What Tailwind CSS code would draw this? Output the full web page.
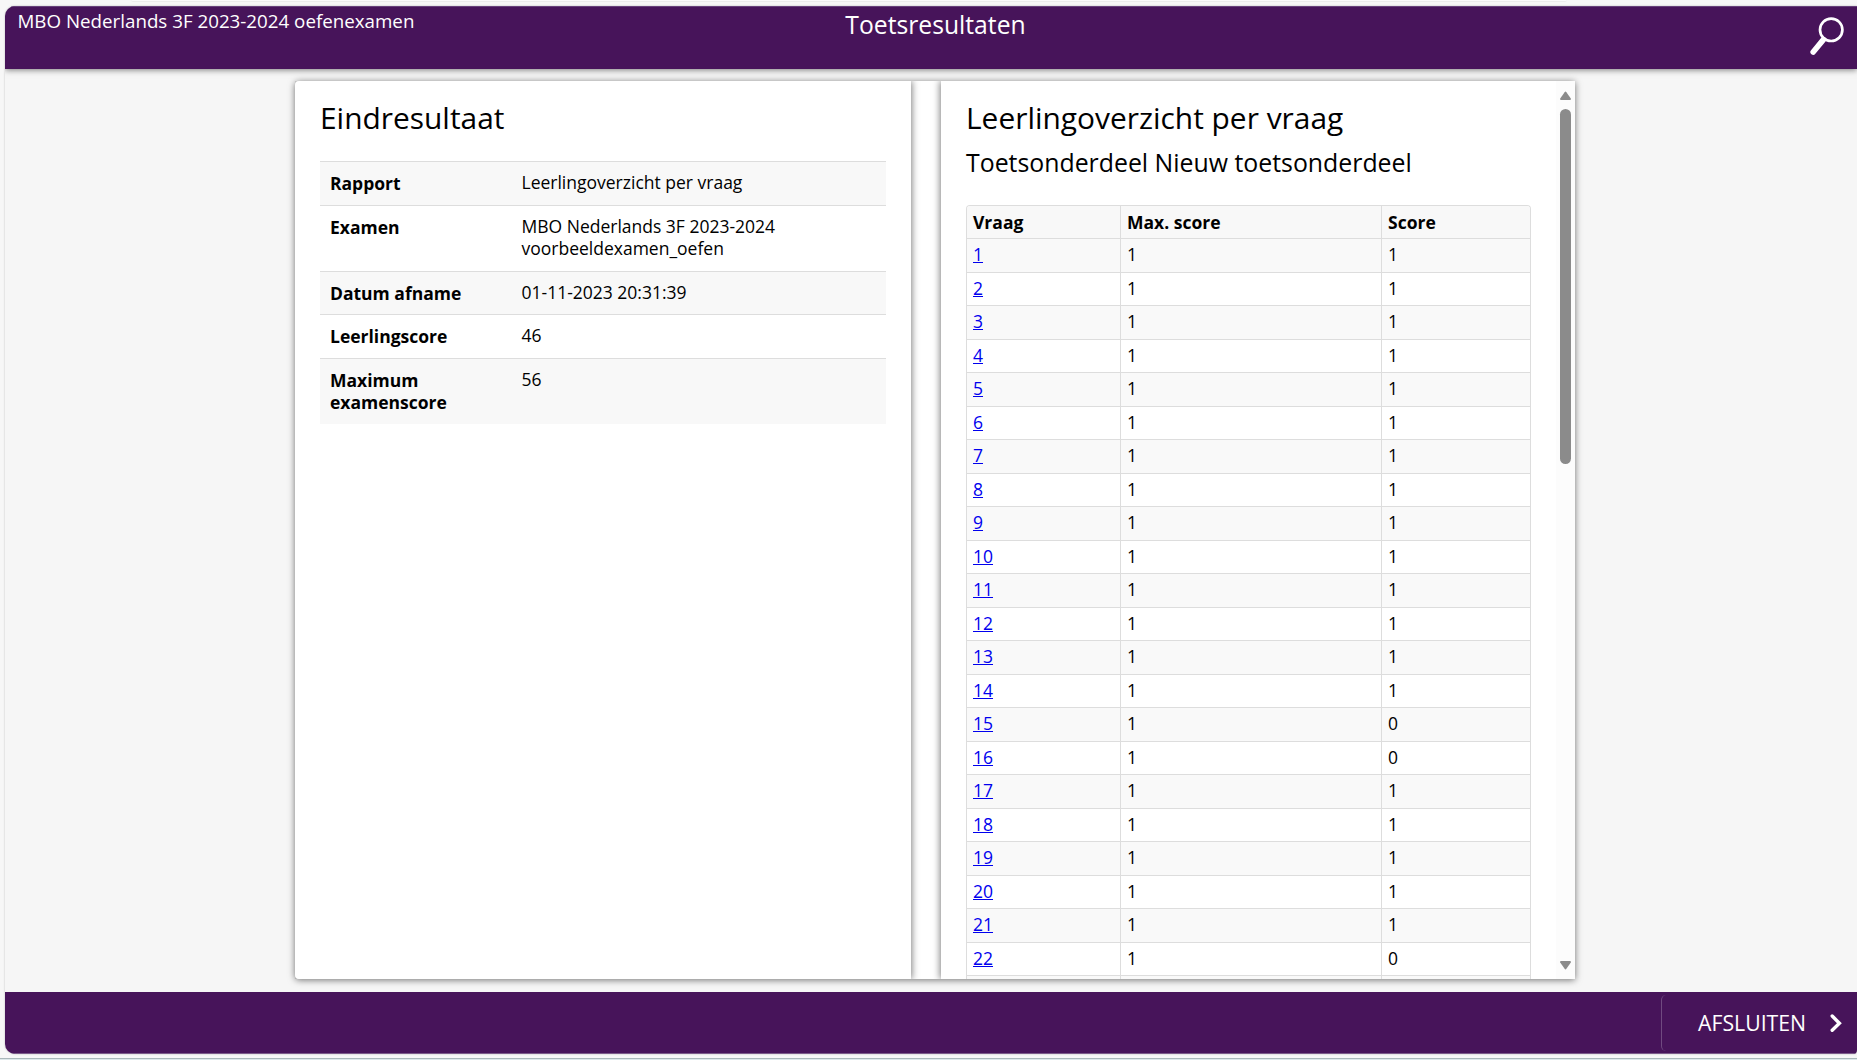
<!DOCTYPE html>
<html lang="nl">
<head>
<meta charset="utf-8">
<title>Toetsresultaten</title>
<script src="https://cdn.jsdelivr.net/npm/@tailwindcss/browser@4"></script>
</head>
<body class="flex h-[1060px] w-[1857px] flex-col overflow-hidden bg-[#f7f7f7] font-['Open_Sans',sans-serif] text-[17.5px] leading-[22px] text-black">
  <div class="flex h-1.5 shrink-0 justify-center">
    <div class="mr-[160px] h-0.5 w-[1436px] rounded-b-lg border-b border-[#ececec] bg-[#fbfbfb]"></div>
  </div>
  <div class="ml-[5px] flex h-[1048px] shrink-0 flex-col overflow-hidden rounded-l-[10px] rounded-br-[4px] bg-[#f6f6f6] shadow-[0_0_2px_rgba(0,0,0,0.25)]">
    <header class="z-10 grid h-[63px] shrink-0 grid-cols-[1fr_auto_1fr] border-t border-[#66407a] bg-[#47145a] pt-0.5 text-white shadow-[0_1px_6px_rgba(0,0,0,0.5)]">
      <div class="pl-[12.5px] text-[18.75px] leading-6">MBO Nederlands 3F 2023-2024 oefenexamen</div>
      <h1 class="pt-px pl-[9px] text-[24.7px] leading-[30px]">Toetsresultaten</h1>
      <div class="flex justify-end pt-1.5 pr-3">
        <svg class="h-[42px] w-[36px]" viewBox="0 0 36 42" fill="none" stroke="#fff" stroke-linecap="round">
          <circle cx="22.2" cy="14.8" r="11.2" stroke-width="2.7"/>
          <path d="M14.4 24.6L4.2 37" stroke-width="5.6"/>
        </svg>
      </div>
    </header>

    <main class="flex min-h-0 grow pt-3 pb-[13px] pl-[290px]">
      <div class="flex w-[1280px] gap-[30px] rounded-l-[4px] bg-white shadow-[0_1px_7px_rgba(0,0,0,0.55)] [clip-path:inset(-12px)]">
        <section class="w-[616px] rounded-l-[4px] bg-white pt-[17px] pr-[25px] pl-[25px] shadow-[1px_0_7px_rgba(0,0,0,0.5)] [clip-path:inset(0_-12px_0_0)]">
          <h2 class="text-[29.9px] leading-10">Eindresultaat</h2>
          <dl class="mt-[23px] [&>div]:flex [&>div]:border-t [&>div]:border-[#dddddd] [&_dt]:w-[191px] [&_dt]:pt-2.5 [&_dt]:pr-8 [&_dt]:pl-2.5 [&_dt]:font-bold [&_dd]:w-[320px] [&_dd]:pt-[9px] [&_dd]:pl-[10.5px]">
            <div class="h-11 bg-[#f8f8f8]"><dt>Rapport</dt><dd>Leerlingoverzicht per vraag</dd></div>
            <div class="h-[66px]"><dt>Examen</dt><dd>MBO Nederlands 3F 2023-2024 voorbeeldexamen_oefen</dd></div>
            <div class="h-[43px] bg-[#f8f8f8]"><dt>Datum afname</dt><dd>01-11-2023 20:31:39</dd></div>
            <div class="h-11"><dt>Leerlingscore</dt><dd>46</dd></div>
            <div class="h-[66px] bg-[#f8f8f8]"><dt>Maximum examenscore</dt><dd>56</dd></div>
          </dl>
        </section>

        <section class="flex w-[634px] bg-white shadow-[-1px_0_7px_rgba(0,0,0,0.5)] [clip-path:inset(0_0_0_-12px)]">
          <div class="h-[898px] grow overflow-hidden pt-[17px] pl-[25px]">
            <h2 class="text-[29.9px] leading-10">Leerlingoverzicht per vraag</h2>
            <h3 class="mt-[9px] text-[24.85px] leading-[30px]">Toetsonderdeel Nieuw toetsonderdeel</h3>
            <div class="mt-7 w-[565px] overflow-hidden rounded-t-[4px] border-x border-t border-[#dddddd]">
              <div class="grid h-8 grid-cols-[153px_261px_149px] bg-[#f8f8f8] font-bold">
                <div class="pt-[5px] pl-1.5">Vraag</div>
                <div class="border-l border-[#dddddd] pt-[5px] pl-1.5">Max. score</div>
                <div class="border-l border-[#dddddd] pt-[5px] pl-1.5">Score</div>
              </div>
              <div id="rows"></div>
              <div class="grid h-8 grid-cols-[153px_261px_149px] border-t border-[#dddddd] bg-[#f9f9f9]">
                <div></div>
                <div class="border-l border-[#dddddd]"></div>
                <div class="border-l border-[#dddddd]"></div>
              </div>
            </div>
          </div>
          <div class="flex w-[19px] flex-col items-center bg-[#fcfcfc] pt-2.5 pr-px pb-[9px]">
            <svg class="h-[9px] w-[11px]" viewBox="0 0 11 9"><path d="M4.6 1.2Q5.5 0 6.4 1.2L10.8 7.6Q11.2 9 10 9H1Q-.2 9 .2 7.6Z" fill="#8b8b8b"/></svg>
            <div class="mt-[9px] h-[355px] w-[11px] rounded-full bg-[#8b8b8b]"></div>
            <svg class="mt-auto h-[9px] w-[11px]" viewBox="0 0 11 9"><path d="M4.6 7.8Q5.5 9 6.4 7.8L10.8 1.4Q11.2 0 10 0H1Q-.2 0 .2 1.4Z" fill="#8b8b8b"/></svg>
          </div>
        </section>
      </div>
    </main>

    <footer class="flex h-[62px] shrink-0 justify-end border-b border-[#7b5a8a] bg-[#47145a] pt-[3px] pb-0.5 text-white">
      <button class="flex w-[196px] items-center rounded-l-[5px] border-l border-[#704a80] pl-9 text-left text-[21.25px] leading-[29px]">
        <span class="w-[131px] pb-0.5">AFSLUITEN</span>
        <svg class="-mt-px h-5 w-[14px]" viewBox="0 0 14 20" fill="none" stroke="#fff" stroke-width="3.4" stroke-linecap="round" stroke-linejoin="miter"><path d="M3.2 3L10.4 10.2L3.2 17.2"/></svg>
      </button>
    </footer>
  </div>
  <div class="mt-1 h-0.5 shrink-0 border-t border-[#a9b7ba] bg-[#dde8ea]"></div>

  <script>
    const scores = [1,1,1,1,1,1,1,1,1,1,1,1,1,1,0,0,1,1,1,1,1,0];
    document.getElementById('rows').innerHTML = scores.map((s, i) => `
      <div class="grid grid-cols-[153px_261px_149px] border-t border-[#dddddd] ${i % 2 ? 'h-[33px]' : 'h-[34px] bg-[#f9f9f9]'}">
        <div class="pt-1 pl-1.5"><a href="#" class="text-[#0000ee] underline">${i + 1}</a></div>
        <div class="border-l border-[#dddddd] pt-1 pl-1.5">1</div>
        <div class="border-l border-[#dddddd] pt-1 pl-1.5">${s}</div>
      </div>`).join('');
  </script>
</body>
</html>
